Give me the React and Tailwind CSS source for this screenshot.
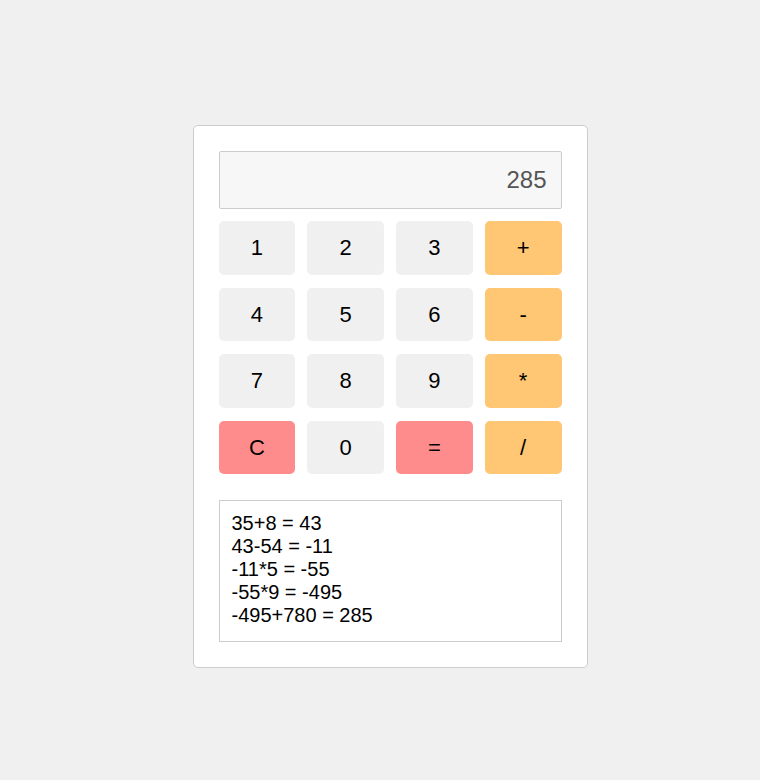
const keys = [
  { label: "1", tone: "num" },
  { label: "2", tone: "num" },
  { label: "3", tone: "num" },
  { label: "+", tone: "op" },
  { label: "4", tone: "num" },
  { label: "5", tone: "num" },
  { label: "6", tone: "num" },
  { label: "-", tone: "op" },
  { label: "7", tone: "num" },
  { label: "8", tone: "num" },
  { label: "9", tone: "num" },
  { label: "*", tone: "op" },
  { label: "C", tone: "act" },
  { label: "0", tone: "num" },
  { label: "=", tone: "act" },
  { label: "/", tone: "op" },
];

const history = ["35+8 = 43", "43-54 = -11", "-11*5 = -55", "-55*9 = -495", "-495+780 = 285"];

function Key({ label, tone }) {
  const bg =
    tone === "op" ? "bg-[#ffc673]" : tone === "act" ? "bg-[#ff8c8c]" : "bg-[#f0f0f0]";
  return (
    <button
      className={`${bg} h-[53.5px] rounded-[5px] text-[22px] text-black flex items-center justify-center cursor-pointer`}
    >
      {label}
    </button>
  );
}

export default function App() {
  return (
    <div
      className="min-h-screen bg-[#f0f0f0] flex justify-center items-start pt-[125px] pl-5"
      style={{ fontFamily: '"Liberation Sans", Arial, sans-serif' }}
    >
      <div className="w-[395px] bg-white border border-[#cccccc] rounded-[5px] p-[25px]">
        {/* display */}
        <div className="h-[58px] bg-[#f7f7f7] border border-[#cccccc] rounded-[2px] flex items-center justify-end pr-[14px] text-[24px] text-[#555555]">
          285
        </div>

        {/* keypad */}
        <div className="grid grid-cols-4 gap-x-3 gap-y-[13px] mt-3">
          {keys.map(k => (
            <Key key={k.label} {...k} />
          ))}
        </div>

        {/* history */}
        <div className="mt-[25.5px] h-[142px] border border-[#cccccc] pt-[11px] px-3 text-[20px] leading-[23px] text-black">
          {history.map(line => (
            <div key={line}>{line}</div>
          ))}
        </div>
      </div>
    </div>
  );
}
